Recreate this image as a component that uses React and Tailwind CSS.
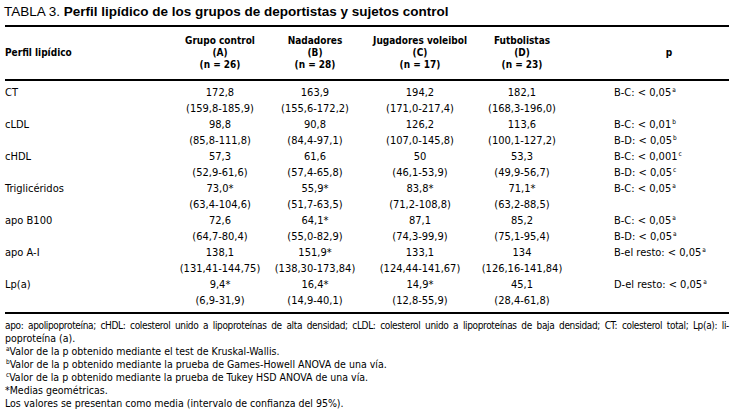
const rows = [
  {
    label: "CT",
    vals: [["172,8", "(159,8-185,9)"], ["163,9", "(155,6-172,2)"], ["194,2", "(171,0-217,4)"], ["182,1", "(168,3-196,0)"]],
    p: [["B-C: < 0,05", "a"]],
  },
  {
    label: "cLDL",
    vals: [["98,8", "(85,8-111,8)"], ["90,8", "(84,4-97,1)"], ["126,2", "(107,0-145,8)"], ["113,6", "(100,1-127,2)"]],
    p: [["B-C: < 0,01", "b"], ["B-D: < 0,05", "b"]],
  },
  {
    label: "cHDL",
    vals: [["57,3", "(52,9-61,6)"], ["61,6", "(57,4-65,8)"], ["50", "(46,1-53,9)"], ["53,3", "(49,9-56,7)"]],
    p: [["B-C: < 0,001", "c"], ["B-D: < 0,05", "c"]],
  },
  {
    label: "Triglicéridos",
    vals: [["73,0*", "(63,4-104,6)"], ["55,9*", "(51,7-63,5)"], ["83,8*", "(71,2-108,8)"], ["71,1*", "(63,2-88,5)"]],
    p: [["B-C: < 0,05", "a"]],
  },
  {
    label: "apo B100",
    vals: [["72,6", "(64,7-80,4)"], ["64,1*", "(55,0-82,9)"], ["87,1", "(74,3-99,9)"], ["85,2", "(75,1-95,4)"]],
    p: [["B-C: < 0,05", "a"], ["B-D: < 0,05", "a"]],
  },
  {
    label: "apo A-I",
    vals: [["138,1", "(131,41-144,75)"], ["151,9*", "(138,30-173,84)"], ["133,1", "(124,44-141,67)"], ["134", "(126,16-141,84)"]],
    p: [["B-el resto: < 0,05", "a"]],
  },
  {
    label: "Lp(a)",
    vals: [["9,4*", "(6,9-31,9)"], ["16,4*", "(14,9-40,1)"], ["14,9*", "(12,8-55,9)"], ["45,1", "(28,4-61,8)"]],
    p: [["D-el resto: < 0,05", "a"]],
  },
];

const heads = [
  ["Grupo control", "(A)", "(n = 26)"],
  ["Nadadores", "(B)", "(n = 28)"],
  ["Jugadores voleibol", "(C)", "(n = 17)"],
  ["Futbolistas", "(D)", "(n = 23)"],
];

const narrow = "font-['Liberation_Sans_Narrow','Arial_Narrow','DejaVu_Sans_Condensed',sans-serif]";
const cols = "grid grid-cols-[166px_98px_92px_118px_86px_164px] whitespace-nowrap";

function Sup({ children }) {
  return <sup className="text-[6.5px] leading-none top-[-4px] ml-[1px]">{children}</sup>;
}

export default function App() {
  return (
    <div className="w-[738px] h-[414px] bg-white text-black overflow-hidden">
      <div className="h-[25px] pl-[4px] flex items-center font-['Liberation_Sans',Arial,sans-serif] text-[13.5px]">
        <span>TABLA 3.&nbsp;</span>
        <span className="font-bold">Perfil lipídico de los grupos de deportistas y sujetos control</span>
      </div>

      <div className={`mx-[5px] w-[724px] ${narrow}`}>
        <div className="h-[2px] bg-black" />
        <div className={`${cols} h-[52px] items-center text-[10px] font-bold leading-[12px]`}>
          <div>Perfil lipídico</div>
          {heads.map((h) => (
            <div key={h[0]} className="text-center">
              {h.map((t) => (
                <div key={t}>{t}</div>
              ))}
            </div>
          ))}
          <div className="text-center pl-[44px]">p</div>
        </div>
        <div className="h-[2px] bg-black" />

        <div className="pt-[4px] pb-[3px] text-[11px] leading-[16px]">
          {rows.map((r) => (
            <div key={r.label} className={cols}>
              <div>{r.label}</div>
              {r.vals.map((v, i) => (
                <div key={i} className="text-center">
                  <div>{v[0]}</div>
                  <div>{v[1]}</div>
                </div>
              ))}
              <div className="pl-[49px]">
                {r.p.map((p, i) => (
                  <div key={i}>
                    {p[0]}
                    <Sup>{p[1]}</Sup>
                  </div>
                ))}
              </div>
            </div>
          ))}
        </div>
        <div className="h-[2px] bg-black" />

        <div className="pt-[5px] text-[10.5px] leading-[13px]">
          <div className="text-justify [text-align-last:justify] text-[10px] tracking-[-0.35px]">
            apo: apolipoproteína; cHDL: colesterol unido a lipoproteínas de alta densidad; cLDL: colesterol unido a lipoproteínas de baja densidad; CT: colesterol total; Lp(a): li-
          </div>
          <div>poproteína (a).</div>
          <div>
            <Sup>a</Sup>Valor de la p obtenido mediante el test de Kruskal-Wallis.
          </div>
          <div>
            <Sup>b</Sup>Valor de la p obtenido mediante la prueba de Games-Howell ANOVA de una vía.
          </div>
          <div>
            <Sup>c</Sup>Valor de la p obtenido mediante la prueba de Tukey HSD ANOVA de una vía.
          </div>
          <div>*Medias geométricas.</div>
          <div>Los valores se presentan como media (intervalo de confianza del 95%).</div>
        </div>
      </div>
    </div>
  );
}
